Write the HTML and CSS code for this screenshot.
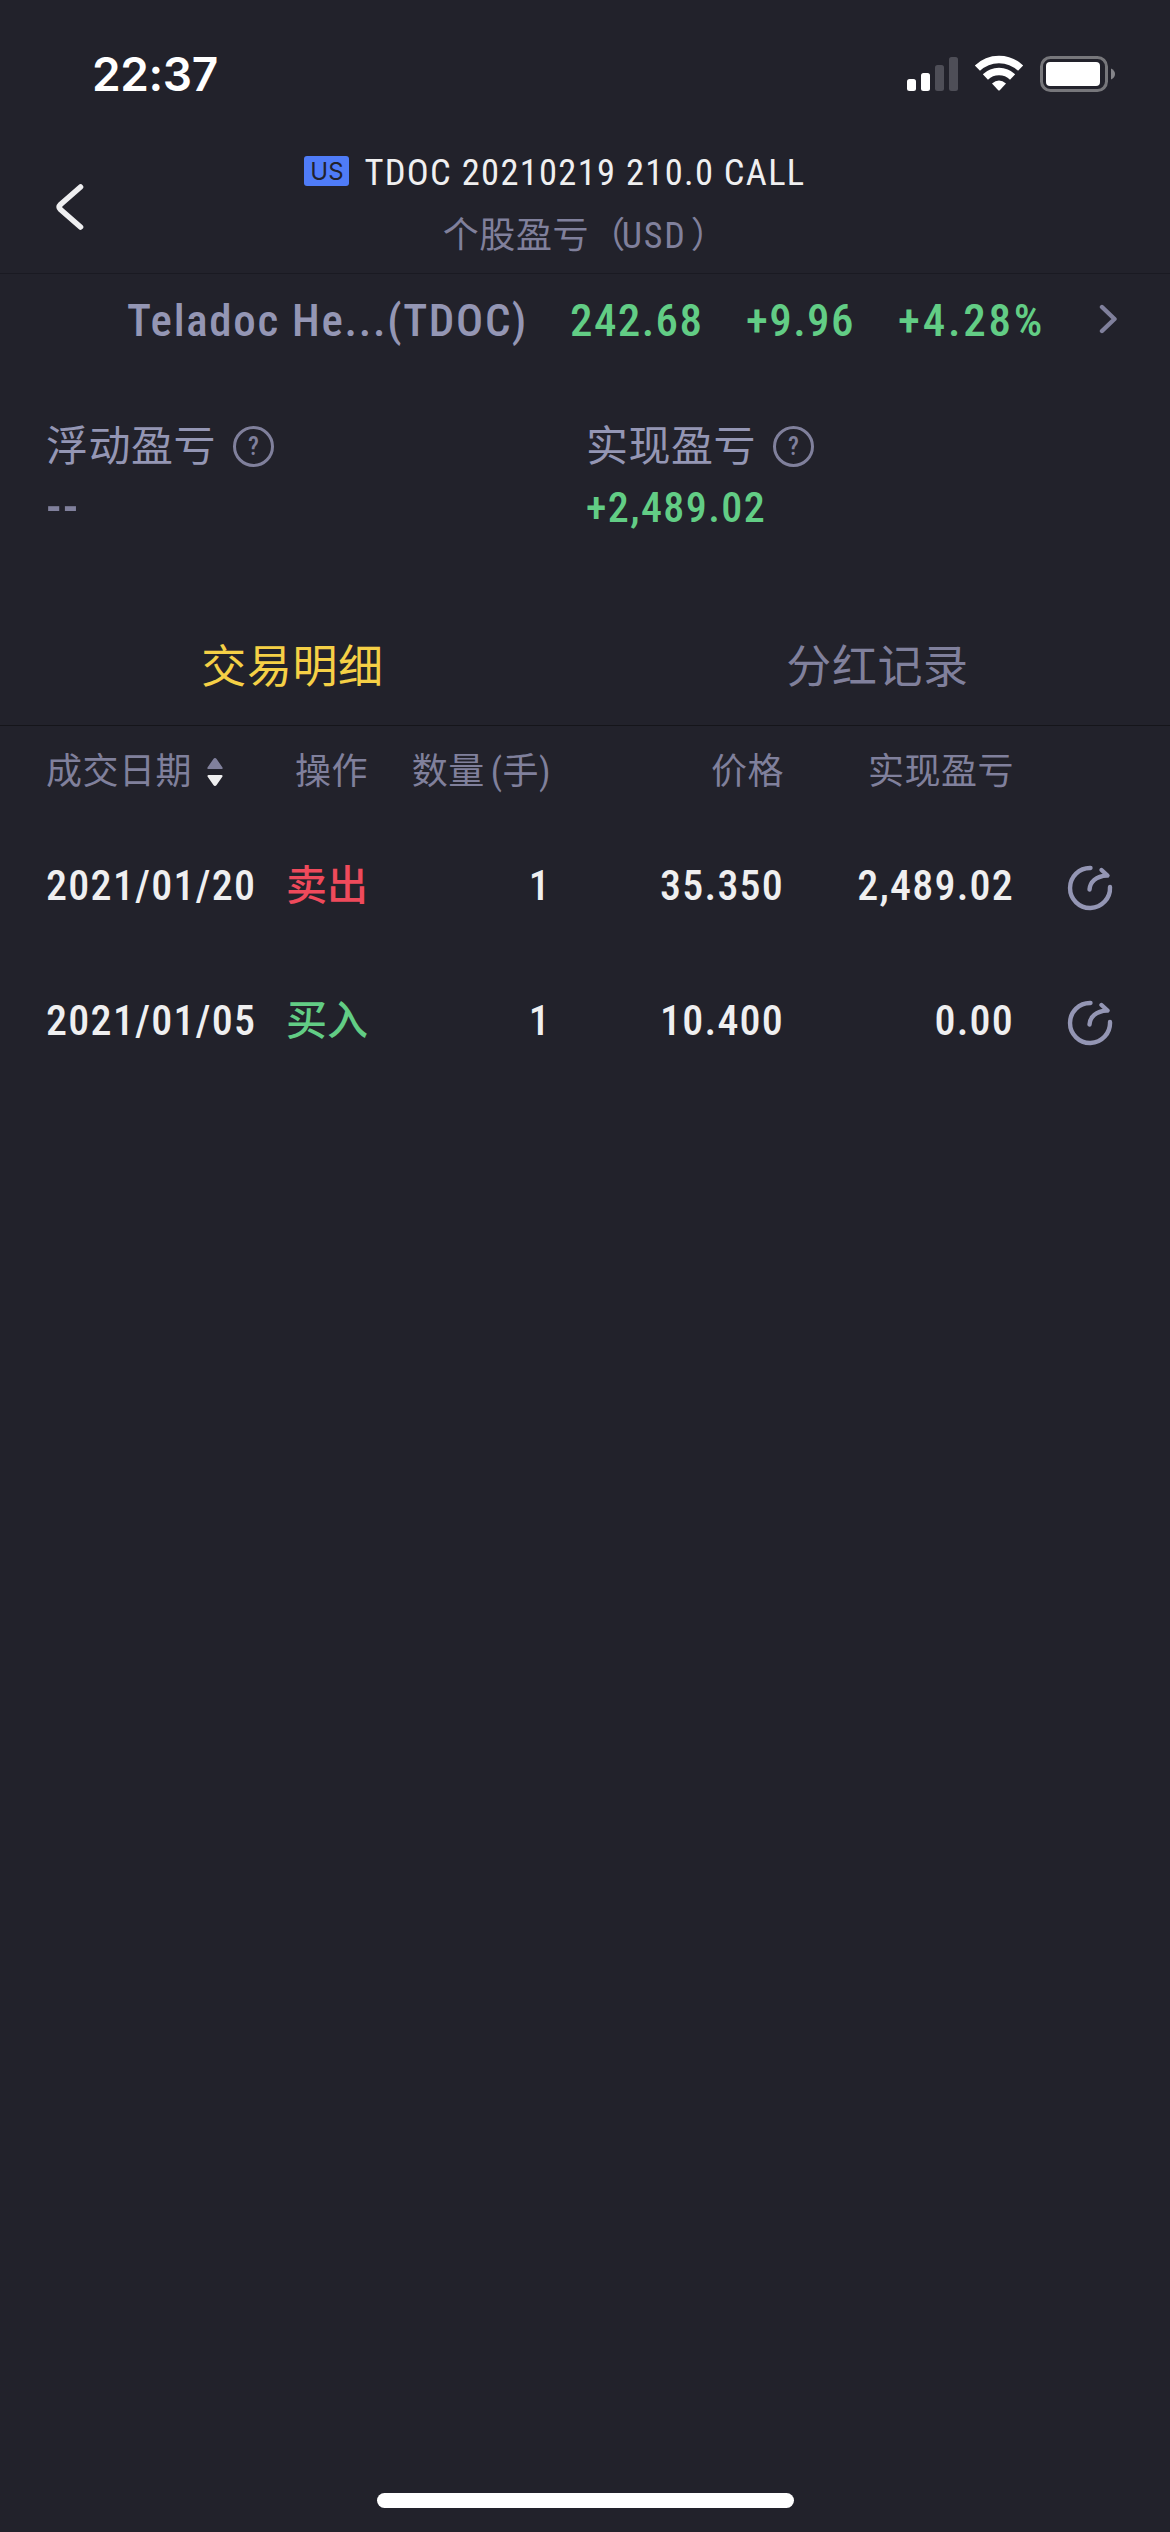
FILE: index.html
```html
<!DOCTYPE html>
<html lang="zh-CN">
<head>
<meta charset="utf-8">
<title>个股盈亏</title>
<link rel="stylesheet" href="styles.css">
</head>
<body>
<div class="screen">
  <div class="status">
    <span class="clock">22:37</span>
    <div class="status-icons">
      <svg class="signal" width="51" height="34" viewBox="0 0 51 34">
        <g fill="#fff"><rect x="0" y="22" width="9" height="12" rx="2.5"/><rect x="14" y="16" width="9" height="18" rx="2.5"/></g>
        <g fill="#4e4e57"><rect x="28" y="8" width="9" height="26" rx="2.5"/><rect x="42" y="0" width="9" height="34" rx="2.5"/></g>
      </svg>
      <svg class="wifi" width="50" height="36" viewBox="0 0 50 36" fill="none">
        <g stroke="#fff" stroke-width="7.4">
          <path d="M3.4 13.2A31 31 0 0 1 46.6 13.2"/>
          <path d="M11.4 22A19.5 19.5 0 0 1 38.6 22"/>
        </g>
        <path d="M18 28.6Q25 22.4 32 28.6L26 35Q25 36 24 35Z" fill="#fff"/>
      </svg>
      <svg class="battery" width="76" height="36" viewBox="0 0 76 36">
        <rect x="1.5" y="1.5" width="65" height="33" rx="9" fill="none" stroke="#77777b" stroke-width="3"/>
        <rect x="6" y="6" width="54" height="24" rx="4" fill="#fff"/>
        <path d="M71 12.5Q75 14.5 75 18T71 23.5Z" fill="#85858a"/>
      </svg>
    </div>
  </div>

  <header class="header">
    <svg class="back" width="30" height="48" viewBox="0 0 30 48"><path d="M25.5 4L5.5 21.5Q3 24 5.5 26.5L25.5 44" fill="none" stroke="#eeeef0" stroke-width="5.6" stroke-linecap="round"/></svg>
    <div class="titles">
      <div class="title"><span class="market">US</span><span class="contract">TDOC 20210219 210.0 CALL</span></div>
      <div class="subtitle">个股盈亏（<span class="currency">USD</span>）</div>
    </div>
  </header>

  <div class="quote">
    <span class="quote-name">Teladoc He...(TDOC)</span>
    <span class="up">242.68</span>
    <span class="up">+9.96</span>
    <span class="up percent">+4.28%</span>
    <svg width="20" height="32" viewBox="0 0 20 32"><path d="M4 3L16.500 15L4 27" fill="none" stroke="#80809c" stroke-width="4.400" stroke-linecap="round" stroke-linejoin="round"/></svg>
  </div>

  <div class="summary">
    <div>
      <div class="summary-label">浮动盈亏<span class="help">?</span></div>
      <div class="summary-value none">--</div>
    </div>
    <div>
      <div class="summary-label">实现盈亏<span class="help">?</span></div>
      <div class="summary-value up">+2,489.02</div>
    </div>
  </div>

  <nav class="tabs">
    <span class="tab active">交易明细</span>
    <span class="tab">分红记录</span>
  </nav>

  <div class="row head">
    <span class="date">成交日期<svg class="sort" width="16" height="28" viewBox="0 0 16 28"><path d="M8 0Q9 0 9.600 1L15.500 9.500Q16 11 14.500 11H1.500Q0 11 .5 9.500L6.400 1Q7 0 8 0Z" fill="#80809c"/><path d="M8 28Q7 28 6.400 27L.5 18.500Q0 17 1.500 17H14.500Q16 17 15.500 18.500L9.600 27Q9 28 8 28Z" fill="#efeff0"/></svg></span>
    <span>操作</span>
    <span>数量<span class="unit">(手)</span></span>
    <span>价格</span>
    <span>实现盈亏</span>
  </div>
  <div class="row">
    <span class="date">2021/01/20</span>
    <span class="side sell">卖出</span>
    <span class="qty">1</span>
    <span>35.350</span>
    <span>2,489.02</span>
    <svg class="share" width="46" height="46" viewBox="0 0 46 46"><path d="M23.500 3A20 20 0 1 0 43 22M22.500 24.500C23 17 29 11 40 10.500M34.500 5L40.500 10.500" /></svg>
  </div>
  <div class="row">
    <span class="date">2021/01/05</span>
    <span class="side buy">买入</span>
    <span class="qty">1</span>
    <span>10.400</span>
    <span>0.00</span>
    <svg class="share" width="46" height="46" viewBox="0 0 46 46"><path d="M23.500 3A20 20 0 1 0 43 22M22.500 24.500C23 17 29 11 40 10.500M34.500 5L40.500 10.500" /></svg>
  </div>

  <div class="home-bar"></div>
</div>
</body>
</html>
```
FILE: styles.css
```css
* { box-sizing: border-box; }

body {
  margin: 0;
  background: #22222b;
  color: #efeff0;
  font-family: Roboto, "Noto Sans CJK SC", sans-serif;
  font-stretch: 87%;
  -webkit-font-smoothing: antialiased;
}

.screen {
  display: flex;
  flex-direction: column;
  width: 1170px;
  height: 2532px;
  padding-bottom: 24px;
}

svg { display: block; flex: none; }

/* status bar */
.status {
  display: flex;
  justify-content: space-between;
  height: 140px;
  padding: 44px 54px 0 92px;
}
.clock {
  color: #fff;
  font: 600 46px/60px Inter, sans-serif;
  letter-spacing: -0.4px;
}
.status-icons { display: flex; align-items: flex-start; }
.signal { margin-top: 13px; }
.wifi { margin: 11px 0 0 16px; }
.battery { margin: 12px 0 0 16px; }

/* header */
.header {
  display: grid;
  grid-template-columns: 84px 1fr 84px;
  height: 134px;
  padding-top: 4px;
  border-bottom: 1px solid #1a1a22;
}
.back { margin: 39px 0 0 55px; }
.titles { text-align: center; white-space: nowrap; }
.title {
  display: flex;
  align-items: center;
  justify-content: center;
  height: 56px;
  padding-right: 60px;
}
.market {
  width: 45px;
  height: 30px;
  margin: 0 15px 2px 0;
  border-radius: 3px;
  background: #4f7cf8;
  color: #22222b;
  font: 400 24px/31px Inter, sans-serif;
}
.contract { font-size: 36.5px; font-weight: 450; line-height: 57px; letter-spacing: 1.3px; }
.subtitle {
  margin-top: 8px;
  color: #80809c;
  font-size: 36px;
  line-height: 56px;
  letter-spacing: 0.6px;
}
.currency { margin: 0 4px 0 -4px; font-weight: 450; letter-spacing: 1.8px; }

/* underlying quote */
.quote {
  display: grid;
  grid-template-columns: 443px 176px 152px 1fr auto;
  align-items: center;
  height: 92px;
  padding: 0 52px 0 127px;
  font-size: 45px;
  font-weight: 470;
  letter-spacing: 1.4px;
}
.quote-name { color: #9496b4; letter-spacing: 1.7px; }
.percent { letter-spacing: 2.8px; }
.up { color: #62cd85; }

/* profit summary */
.summary {
  display: grid;
  grid-template-columns: 540px 1fr;
  height: 243px;
  padding: 51px 46px 0;
}
.summary-label {
  display: flex;
  align-items: center;
  color: #9496b4;
  font-size: 42px;
  line-height: 60px;
  letter-spacing: 0.5px;
}
.help {
  width: 41px;
  height: 41px;
  margin: 0 0 2px 17px;
  border: 3px solid #80809c;
  border-radius: 50%;
  color: #80809c;
  font-size: 25px;
  font-weight: 500;
  line-height: 35px;
  letter-spacing: 0;
  text-align: center;
}
.summary-value { font-size: 42px; font-weight: 470; line-height: 61px; letter-spacing: 1.4px; }
.none { color: #80809c; font-size: 50px; font-weight: 500; }

/* tabs */
.tabs {
  display: grid;
  grid-template-columns: 1fr 1fr;
  height: 117px;
  border-bottom: 1px solid #15151a;
  text-align: center;
}
.tab { color: #80809c; font-size: 45px; line-height: 117px; letter-spacing: 0.6px; }
.active { color: #f5d046; }

/* trades */
.row {
  display: grid;
  grid-template-columns: 240px 82px 183px 233px 230px 1fr;
  align-items: center;
  height: 135px;
  padding: 0 57px 0 46px;
  font-size: 42px;
  font-weight: 470;
  line-height: 60px;
  letter-spacing: 1.2px;
  text-align: right;
  white-space: nowrap;
}
.head { height: 92px; color: #80809c; font-size: 36px; font-weight: 400; letter-spacing: 0.5px; }
.unit { margin-left: 6px; }
.date { display: flex; align-items: center; letter-spacing: 1.3px; }
.head .date { letter-spacing: 0.5px; }
.sort { margin-left: 15px; }
.side { font-size: 41px; font-weight: 500; letter-spacing: 0; }
.sell { color: #ef4a5b; }
.buy { color: #62cd85; }
.share {
  justify-self: end;
  margin-top: 5px;
  fill: none;
  stroke: #9496b4;
  stroke-width: 4.4;
  stroke-linecap: round;
  stroke-linejoin: round;
}

.home-bar {
  width: 417px;
  height: 15px;
  margin: auto auto 0;
  border-radius: 8px;
  background: #fff;
}
```
